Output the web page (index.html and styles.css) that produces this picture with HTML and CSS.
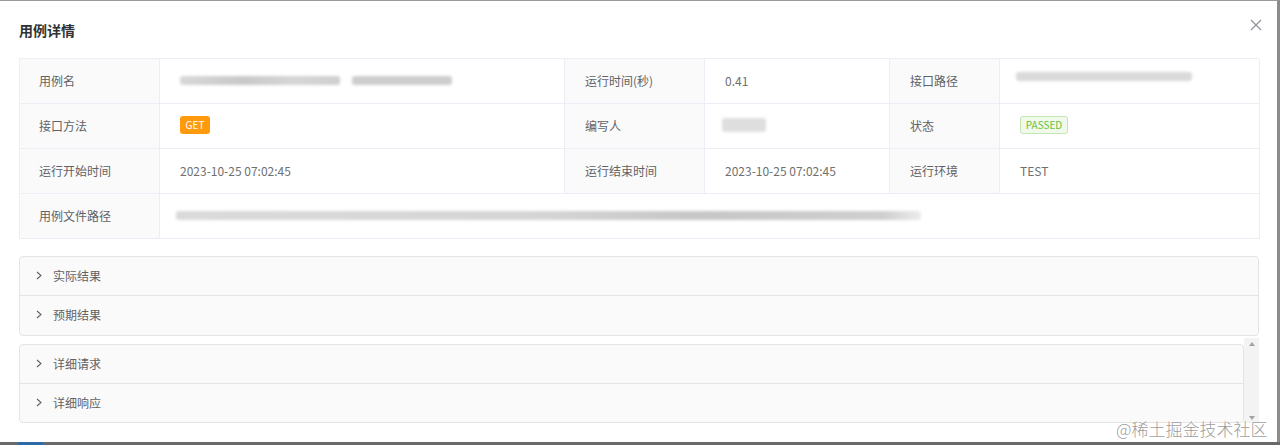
FILE: index.html
```html
<!DOCTYPE html>
<html lang="zh">
<head>
<meta charset="utf-8">
<link rel="stylesheet" href="styles.css">
</head>
<body>
<div class="screen">
  <div class="dialog">
    <div class="dlg-header">
      <span class="dlg-title">用例详情</span>
      <svg class="close" width="12" height="12" viewBox="0 0 12 12"><path d="M1 1L11 11M11 1L1 11" stroke="#909399" stroke-width="1.2" fill="none"/></svg>
    </div>
    <div class="desc">
      <div class="cell lbl">用例名</div>
      <div class="cell val"><span class="blur b1"></span><span class="blur b1b"></span></div>
      <div class="cell lbl">运行时间(秒)</div>
      <div class="cell val">0.41</div>
      <div class="cell lbl">接口路径</div>
      <div class="cell val"><span class="blur b3"></span></div>

      <div class="cell lbl">接口方法</div>
      <div class="cell val"><span class="tag get">GET</span></div>
      <div class="cell lbl">编写人</div>
      <div class="cell val"><span class="blur b2"></span></div>
      <div class="cell lbl">状态</div>
      <div class="cell val"><span class="tag pass">PASSED</span></div>

      <div class="cell lbl">运行开始时间</div>
      <div class="cell val">2023-10-25 07:02:45</div>
      <div class="cell lbl">运行结束时间</div>
      <div class="cell val">2023-10-25 07:02:45</div>
      <div class="cell lbl">运行环境</div>
      <div class="cell val">TEST</div>

      <div class="cell lbl">用例文件路径</div>
      <div class="cell val span5"><span class="blur b4"></span></div>
    </div>

    <div class="collapse first">
      <div class="item"><svg class="chev" width="6" height="9" viewBox="0 0 6 9"><path d="M1 1L5 4.5L1 8" stroke="#606266" stroke-width="1.1" fill="none"/></svg><span>实际结果</span></div>
      <div class="item"><svg class="chev" width="6" height="9" viewBox="0 0 6 9"><path d="M1 1L5 4.5L1 8" stroke="#606266" stroke-width="1.1" fill="none"/></svg><span>预期结果</span></div>
    </div>

    <div class="scrollwrap">
      <div class="collapse second">
        <div class="item"><svg class="chev" width="6" height="9" viewBox="0 0 6 9"><path d="M1 1L5 4.5L1 8" stroke="#606266" stroke-width="1.1" fill="none"/></svg><span>详细请求</span></div>
        <div class="item"><svg class="chev" width="6" height="9" viewBox="0 0 6 9"><path d="M1 1L5 4.5L1 8" stroke="#606266" stroke-width="1.1" fill="none"/></svg><span>详细响应</span></div>
      </div>
      <div class="scrollbar">
        <span class="arrow up"></span>
        <span class="arrow down"></span>
      </div>
    </div>
  </div>
  <div class="page-strip"><span class="blue"></span></div>
  <div class="watermark">@稀土掘金技术社区</div>
</div>
</body>
</html>
```
FILE: styles.css
```css
* { box-sizing: border-box; }
html, body { margin: 0; padding: 0; background: #fff; }
body { font-family: "Noto Sans CJK SC", "Noto Sans", sans-serif; width: 1280px; height: 445px; overflow: hidden; }

.screen { position: relative; width: 1280px; height: 445px; background: #5a5a5a; }

.dialog {
  width: 1280px;
  height: 442px;
  background: #fff;
  border-top: 1px solid #9a9a9a;
  border-right: 3px solid #8c8c8c;
  padding: 0 19px 0 19px;
  display: flex;
  flex-direction: column;
}

.dlg-header {
  height: 57px;
  display: flex;
  align-items: flex-start;
  justify-content: space-between;
  padding-top: 19px;
}
.dlg-title { font-size: 14px; font-weight: 700; color: #303133; line-height: 20px; }
.close { margin-top: -1px; margin-right: -4px; }

.desc {
  display: grid;
  grid-template-columns: 140px 405px 140px 185px 110px 260px;
  grid-auto-rows: 45px;
  width: 1240px;
  border-top: 1px solid #ebeef5;
  border-left: 1px solid #ebeef5;
}
.cell {
  border-right: 1px solid #ebeef5;
  border-bottom: 1px solid #ebeef5;
  display: flex;
  align-items: center;
  padding: 0 20px 2px;
  font-size: 12px;
  color: #606266;
}
.desc .cell:nth-child(6n+1) { padding-left: 19px; }
.lbl { background: #fafafa; color: #606266; }
.val { color: #707070; background: #fff; }
.span5 { grid-column: span 5; padding-left: 16px; }

.blur { display: inline-block; height: 9px; background: #cfcfcf; filter: blur(1.5px); border-radius: 3px; }
.b1 { width: 160px; background: linear-gradient(90deg, #d8d8d8, #c8c8c8 40%, #d6d6d6 70%, #cfcfcf); }
.b1b { width: 100px; margin-left: 12px; background: #cdcdcd; }
.b2 { width: 44px; height: 14px; background: #dedede; margin-left: -3px; }
.b3 { width: 176px; background: #d9d9d9; margin-left: -4px; margin-top: -8px; }
.b4 { width: 745px; background: linear-gradient(90deg, #dadada, #d4d4d4 50%, #c6c6c6 70%, #cfcfcf 95%, #ececec); }

.tag { display: inline-flex; align-items: center; justify-content: center; height: 18px; border-radius: 3px; font-size: 10px; line-height: 1; }
.get { background: #ff9a0c; color: #fff; width: 30px; }
.pass { background: #f0f9eb; color: #67c23a; border: 1px solid #c2e7b0; width: 48px; }

.collapse {
  border: 1px solid #e4e4e4;
  border-radius: 4px;
  background: #fafafa;
}
.collapse.first { margin-top: 17px; width: 1240px; }
.collapse .item {
  height: 39px;
  display: flex;
  align-items: center;
  padding-left: 16px;
  padding-bottom: 2px;
  font-size: 12px;
  color: #606266;
  border-bottom: 1px solid #e4e4e4;
}
.collapse .item:last-child { border-bottom: none; }
.chev { margin-right: 11px; }

.scrollwrap {
  display: flex;
  width: 1240px;
  margin-top: 2px;
  height: 85px;
}
.collapse.second { flex: 1; margin-top: 6px; height: 79px; }
.scrollbar {
  width: 15px;
  background: #f3f3f3;
  position: relative;
  display: flex;
  flex-direction: column;
  justify-content: space-between;
  align-items: center;
  padding: 4px 0 3px;
}
.arrow { width: 0; height: 0; border-left: 3px solid transparent; border-right: 3px solid transparent; }
.arrow.up { border-bottom: 4px solid #a3a3a3; }
.arrow.down { border-top: 4px solid #a3a3a3; }

.page-strip { height: 3px; background: #6a6a6a; position: relative; }
.page-strip .blue { position: absolute; left: 18px; top: 0; width: 25px; height: 3px; background: #2f6aa8; }

.watermark {
  position: absolute;
  left: 1116px;
  top: 418px;
  white-space: nowrap;
  font-size: 17px;
  line-height: 22px;
  color: rgba(110, 110, 110, 0.7);
  font-family: "Noto Sans CJK SC", sans-serif;
  font-weight: 300;
  text-shadow: 0 0 1px #fff;
}
```
